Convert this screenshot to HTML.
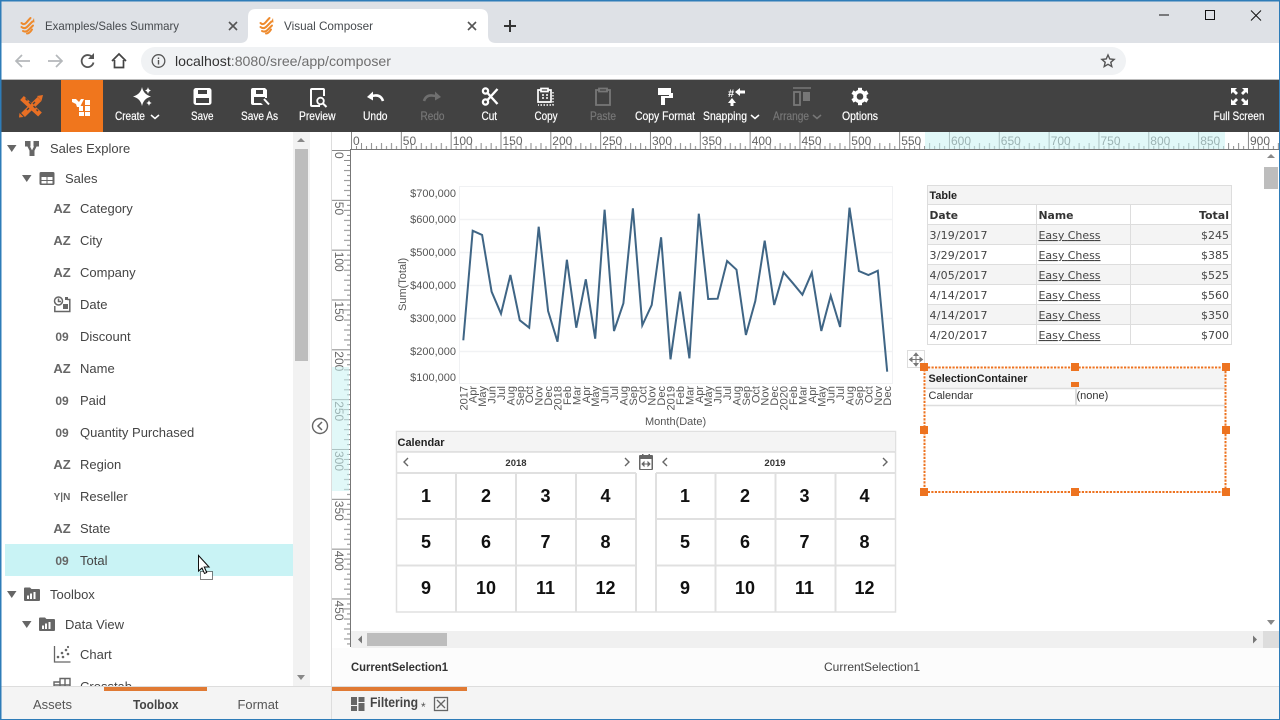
<!DOCTYPE html>
<html lang="en"><head><meta charset="utf-8"><title>Visual Composer</title>
<style>
html,body{margin:0;padding:0;width:1280px;height:720px;overflow:hidden;background:#fff}
svg{display:block;font-family:"Liberation Sans",sans-serif}
.tb{font-size:12px;fill:#fff;stroke:#fff;stroke-width:.2}
.tb.dis{fill:#777;stroke:#777}
.tree{font-size:13px;fill:#444}
.ty{font-size:13px;font-weight:bold;fill:#666;text-anchor:middle}
.n{font-size:12px;font-weight:bold;fill:#666;text-anchor:middle}
.r{font-size:12px;fill:#666}
.ax{font-size:11px;fill:#555}
.xl{font-size:11px;fill:#555;text-anchor:end}
.t{font-family:"DejaVu Sans",sans-serif;font-size:11px;fill:#444}
.tbd{font-family:"DejaVu Sans",sans-serif;font-size:11px;font-weight:bold;fill:#333}
.d{font-size:18px;font-weight:bold;fill:#111;text-anchor:middle}
.h{fill:#ed7320}
</style></head><body>
<svg width="1280" height="720" viewBox="0 0 1280 720" xmlns="http://www.w3.org/2000/svg">
<defs>
<pattern id="rh" patternUnits="userSpaceOnUse" x="351" y="132" width="49.83" height="17">
<path d="M.5 0V17M5.5 14V17M10.5 11V17M15.5 14V17M20.5 11V17M25.5 14V17M30.5 11V17M35.5 14V17M40.5 11V17M45.5 14V17" stroke="#888" fill="none"/>
</pattern>
<pattern id="rv" patternUnits="userSpaceOnUse" x="332" y="150" width="18" height="49.83">
<path d="M0 .5H18M15 5.5H18M12 10.5H18M15 15.5H18M12 20.5H18M15 25.5H18M12 30.5H18M15 35.5H18M12 40.5H18M15 45.5H18" stroke="#888" fill="none"/>
</pattern>
<g id="fl"><path d="M1.500 6q2.500 2.500 5-.5t4-4.500M1.500 10q3 2.500 6-.5t5-5M3 14q3 1.500 5.500-1t4.500-4.500M7 16.500q2.500 0 5-4" stroke="#ee8a2d" stroke-width="2" fill="none" stroke-linecap="round"/><path d="M12 5l2-4 .5 4.500z" fill="#ee8a2d"/></g>
<path id="tooth" d="M0-4.500V-8.700" stroke="#fff" stroke-width="4"/>
</defs>

<!-- chrome -->
<rect width="1280" height="43" fill="#dee1e6"/>
<rect width="1280" height="1.5" fill="#2e7cb8"/>
<path d="M240 43Q248 43 248 35V17Q248 9 256 9H480Q488 9 488 17V35Q488 43 496 43Z" fill="#fff"/>
<use href="#fl" x="20" y="17"/><use href="#fl" x="259" y="17"/>
<text x="45" y="30" font-size="12" fill="#45494d" textLength="134" lengthAdjust="spacingAndGlyphs">Examples/Sales Summary</text>
<text x="284" y="30" font-size="12" fill="#45494d" textLength="89" lengthAdjust="spacingAndGlyphs">Visual Composer</text>
<path d="M229 22l8 8M237 22l-8 8M468 22l8 8M476 22l-8 8" stroke="#555" stroke-width="1.600"/>
<path d="M510 20v12M504 26h12" stroke="#333" stroke-width="2"/>
<path d="M1159 15h10" stroke="#111" stroke-width="1"/>
<rect x="1205.500" y="10.500" width="9" height="9" fill="none" stroke="#111"/>
<path d="M1251 10.500l10 10M1261 10.500l-10 10" stroke="#111"/>
<rect y="43" width="1280" height="37" fill="#fff"/>
<rect x="141" y="47" width="985" height="28" rx="14" fill="#f0f2f4"/>
<path d="M30 61H16M22 55l-6 6 6 6" stroke="#b5b8bb" stroke-width="1.700" fill="none"/>
<path d="M62 61H48M56 55l6 6-6 6" stroke="#b5b8bb" stroke-width="1.700" fill="none"/>
<path d="M92.500 57.500a6 6 0 1 0 1 5" stroke="#555" stroke-width="1.800" fill="none"/><path d="M94 53v6h-6z" fill="#555"/>
<path d="M112 61l7-7 7 7M114.500 60v7.500h9V60" stroke="#444" stroke-width="1.700" fill="none"/>
<circle cx="158.500" cy="61" r="6.300" fill="none" stroke="#555" stroke-width="1.300"/><path d="M158.500 60v4.500M158.500 57.500v1.500" stroke="#555" stroke-width="1.400"/>
<text x="175" y="66" font-size="14" fill="#6f6f6f" textLength="216" lengthAdjust="spacingAndGlyphs"><tspan fill="#333">localhost</tspan>:8080/sree/app/composer</text>
<path d="M1108 55l1.800 4 4.300.4-3.300 2.900 1 4.300-3.800-2.300-3.800 2.300 1-4.300-3.300-2.900 4.300-.4z" fill="none" stroke="#555" stroke-width="1.400"/>

<!-- toolbar -->
<rect y="79" width="1280" height="1" fill="#bbb"/>
<rect y="80" width="1280" height="52" fill="#424242"/>
<rect x="61" y="80" width="42" height="52" fill="#f0761d"/>
<g fill="none">
<path d="M22 98l18 16.500M39.500 99L23 115" stroke="#e86f24" stroke-width="5.500"/>
<path d="M25.500 98.500l2 2M29 102l2 2M33.500 106l2 2M36.500 109.500l1.500 1.500M35 102l-2 2M27 110l2-2" stroke="#424242" stroke-width="1.400"/>
</g>
<path d="M37 96l6-1-1.500 6zM19.500 113l4 4-4.500 .5z" fill="#e86f24"/>
<g fill="#fff"><path d="M72 99h4l3 3 2-3h3l-4 8h-3l-1-3-4-2z"/><rect x="85" y="100" width="5" height="5"/><rect x="85" y="106" width="5" height="5"/><rect x="85" y="112" width="5" height="4"/><rect x="79" y="112" width="5" height="4"/><rect x="79" y="106" width="4" height="5"/></g>

<g fill="#fff">
<!-- create -->
<path d="M142 87q1.500 7.500 9 9.500-7.500 2-9 9.500-1.500-7.500-9-9.500 7.500-2 9-9.500z"/>
<path d="M148 87q.5 2.800 3 3.500-2.500.7-3 3.500-.5-2.800-3-3.500 2.500-.7 3-3.500zM149 100q.5 2.500 2.800 3-2.300.5-2.800 3-.5-2.500-2.800-3 2.300-.5 2.800-3z"/>
<!-- save -->
<path fill-rule="evenodd" d="M196 88h13a2.500 2.500 0 0 1 2.500 2.500v12a2.500 2.500 0 0 1-2.500 2.500h-13a2.500 2.500 0 0 1-2.500-2.500v-12a2.500 2.500 0 0 1 2.500-2.500zm2 2v4h9v-4zm-2 8v5h13v-5z"/>
<!-- save as -->
<path fill-rule="evenodd" d="M253 88h12l2 2v8h-2v-1h-11v6h7l2 2h-10a2 2 0 0 1-2-2V90a2 2 0 0 1 2-2zm3 2v4h7v-4z"/>
<path d="M264 99l5 5.500" stroke="#fff" stroke-width="2" fill="none"/>
</g>
<!-- preview -->
<path d="M320 106h-8a1 1 0 0 1-1-1V90a1 1 0 0 1 1-1h11a1 1 0 0 1 1 1v6" stroke="#fff" stroke-width="2" fill="none"/>
<circle cx="320.500" cy="101" r="3.300" stroke="#fff" stroke-width="1.800" fill="none"/><path d="M323 103.500l3.500 3.500" stroke="#fff" stroke-width="2"/>
<!-- undo/redo -->
<path d="M383 101q-2-6-8-5.500l-4 .5" stroke="#fff" stroke-width="2.600" fill="none"/><path d="M367 97l6-5.500v9z" fill="#fff"/>
<path d="M424 101q2-6 8-5.500l4 .5" stroke="#6f6f6f" stroke-width="2.600" fill="none"/><path d="M441 97l-6-5.500v9z" fill="#6f6f6f"/>
<!-- cut -->
<g stroke="#fff" fill="none"><circle cx="485.500" cy="91" r="2.600" stroke-width="2.300"/><circle cx="485.500" cy="102" r="2.600" stroke-width="2.300"/><path d="M487.500 93l10 11M487.500 100l10-11" stroke-width="2.400"/></g>
<!-- copy -->
<g fill="none" stroke="#fff"><path d="M541 90h-3v12h13V90h-3M541 88.500h7v3h-7z" stroke-width="1.700"/><path d="M542 95h2M546 95h2M546 98h2M542 98h2" stroke-width="1.600"/><path d="M553 92v13h-15" stroke-width="1.400" stroke-dasharray="1.500 1.500"/></g>
<!-- paste -->
<path d="M599 90h-3v15h14V90h-3M599 88.500h8v3h-8z" fill="none" stroke="#777" stroke-width="1.800"/>
<!-- format -->
<path d="M658 88h13v5h2v5h-8v7h-4v-9h8v-1h-11z" fill="#fff"/>
<!-- snapping -->
<text x="728" y="97" font-size="11" font-weight="bold" fill="#fff">#</text>
<path d="M735 92l5-4v2.500h5v3h-5V96zM732 98l4 5h-2.500v3h-3v-3H728z" fill="#fff"/>
<!-- arrange -->
<path d="M793 88h18" stroke="#777" stroke-width="1.600"/><rect x="794" y="92" width="6" height="13" fill="none" stroke="#777" stroke-width="1.800"/><rect x="803" y="92" width="7" height="9" fill="#777"/>
<!-- options -->
<g transform="translate(860 96.500)">
<circle r="5" fill="none" stroke="#fff" stroke-width="3.400"/>
<use href="#tooth"/><use href="#tooth" transform="rotate(60)"/><use href="#tooth" transform="rotate(120)"/><use href="#tooth" transform="rotate(180)"/><use href="#tooth" transform="rotate(240)"/><use href="#tooth" transform="rotate(300)"/>
</g>
<!-- fullscreen -->
<path fill="#fff" d="M1231 88h6l-2 2 3 3-2 2-3-3-2 2zM1248 88v6l-2-2-3 3-2-2 3-3-2-2zM1231 105v-6l2 2 3-3 2 2-3 3 2 2zM1248 105h-6l2-2-3-3 2-2 3 3 2-2z"/>

<g>
<text class="tb" x="115" y="120" textLength="30" lengthAdjust="spacingAndGlyphs">Create</text>
<text class="tb" x="191" y="120" textLength="22.500" lengthAdjust="spacingAndGlyphs">Save</text>
<text class="tb" x="241" y="120" textLength="37" lengthAdjust="spacingAndGlyphs">Save As</text>
<text class="tb" x="299" y="120" textLength="36.500" lengthAdjust="spacingAndGlyphs">Preview</text>
<text class="tb" x="363" y="120" textLength="24.500" lengthAdjust="spacingAndGlyphs">Undo</text>
<text class="tb dis" x="420.500" y="120" textLength="24" lengthAdjust="spacingAndGlyphs">Redo</text>
<text class="tb" x="481.500" y="120" textLength="15.500" lengthAdjust="spacingAndGlyphs">Cut</text>
<text class="tb" x="534.500" y="120" textLength="23" lengthAdjust="spacingAndGlyphs">Copy</text>
<text class="tb dis" x="590" y="120" textLength="26" lengthAdjust="spacingAndGlyphs">Paste</text>
<text class="tb" x="635" y="120" textLength="60" lengthAdjust="spacingAndGlyphs">Copy Format</text>
<text class="tb" x="703" y="120" textLength="44" lengthAdjust="spacingAndGlyphs">Snapping</text>
<text class="tb dis" x="773" y="120" textLength="36" lengthAdjust="spacingAndGlyphs">Arrange</text>
<text class="tb" x="842" y="120" textLength="36" lengthAdjust="spacingAndGlyphs">Options</text>
<text class="tb" x="1213.500" y="120" textLength="51" lengthAdjust="spacingAndGlyphs">Full Screen</text>
<path d="M151 115l4 3.500 4-3.500M751 115l4 3.500 4-3.500" stroke="#fff" stroke-width="1.500" fill="none"/>
<path d="M813 115l4 3.500 4-3.500" stroke="#777" stroke-width="1.500" fill="none"/>
</g>

<!-- left panel -->
<rect x="293" y="132" width="17" height="554" fill="#f2f2f2"/>
<rect x="295" y="149" width="13" height="212" fill="#bdbdbd"/>
<path d="M301 138l-4 4h8zM297 675h8l-4 5z" fill="#888"/>
<rect x="5" y="544" width="288" height="32" fill="#c9f3f5"/>
<path d="M7 145h9.500l-4.750 7zM22 175h9.500l-4.750 7zM7 591h9.500l-4.750 7zM22 621h9.500l-4.750 7z" fill="#666"/>
<path d="M27.500 144l4.500 9M36.500 144L32 153" stroke="#666" stroke-width="2.400"/>
<path d="M25 141h5.500v5.500H25zM33.500 141H39v5.500h-5.500zM29.500 150.500h5v5.500h-5z" fill="#666"/>
<path fill="#666" fill-rule="evenodd" d="M41 172h12a1.500 1.500 0 0 1 1.500 1.500v10a1.500 1.500 0 0 1-1.500 1.500H41a1.500 1.500 0 0 1-1.500-1.500v-10A1.500 1.500 0 0 1 41 172zm.5 5v3h5v-3zm6 0v3h5v-3zm-6 4v2.500h5V181zm6 0v2.500h5V181z"/>
<text class="tree" x="50" y="153">Sales Explore</text>
<text class="tree" x="65" y="183">Sales</text>
<text class="ty" x="62" y="213">AZ</text><text class="tree" x="80" y="213">Category</text>
<text class="ty" x="62" y="245">AZ</text><text class="tree" x="80" y="245">City</text>
<text class="ty" x="62" y="277">AZ</text><text class="tree" x="80" y="277">Company</text>
<g fill="none" stroke="#666" stroke-width="1.500"><circle cx="58.500" cy="301" r="4"/><path d="M58.500 298.500v3h2.500M54.800 306v5.500h15V299.500h-2.500"/></g><rect x="63" y="304" width="5" height="5" fill="#666"/><rect x="65" y="297" width="3" height="3" fill="#666"/>
<text class="tree" x="80" y="309">Date</text>
<text class="n" x="62" y="341">09</text><text class="tree" x="80" y="341">Discount</text>
<text class="ty" x="62" y="373">AZ</text><text class="tree" x="80" y="373">Name</text>
<text class="n" x="62" y="405">09</text><text class="tree" x="80" y="405">Paid</text>
<text class="n" x="62" y="437">09</text><text class="tree" x="80" y="437">Quantity Purchased</text>
<text class="ty" x="62" y="469">AZ</text><text class="tree" x="80" y="469">Region</text>
<text x="62" y="500" font-size="10" font-weight="bold" fill="#666" text-anchor="middle">Y|N</text><text class="tree" x="80" y="501">Reseller</text>
<text class="ty" x="62" y="533">AZ</text><text class="tree" x="80" y="533">State</text>
<text class="n" x="62" y="565">09</text><text class="tree" x="80" y="565">Total</text>
<path fill="#666" fill-rule="evenodd" d="M25 587.500h5l1.500 1.500H39a1 1 0 0 1 1 1V600a1 1 0 0 1-1 1H25a1 1 0 0 1-1-1V588.500a1 1 0 0 1 1-1zm5 6v5.500h2v-5.500zm3.500-1.500V599h2v-7zM27 595.500V599h2v-3.500z"/>
<text class="tree" x="50" y="599">Toolbox</text>
<path fill="#666" fill-rule="evenodd" d="M40 617.500h5l1.500 1.500H54a1 1 0 0 1 1 1V630a1 1 0 0 1-1 1H40a1 1 0 0 1-1-1V618.500a1 1 0 0 1 1-1zm5 6v5.500h2v-5.500zm3.500-1.500V629h2v-7zM42 625.500V629h2v-3.500z"/>
<text class="tree" x="65" y="629">Data View</text>
<path d="M54.500 646v16h16" stroke="#666" stroke-width="1.300" fill="none"/><g fill="#666"><circle cx="58" cy="657" r="1.300"/><circle cx="62" cy="653" r="1.300"/><circle cx="63" cy="657" r="1.300"/><circle cx="66" cy="650" r="1.300"/><circle cx="68" cy="654" r="1.300"/><circle cx="68" cy="647" r="1.100"/></g>
<text class="tree" x="80" y="659">Chart</text>
<path d="M54 682h6v-3.500h10V690H54zM60 678.500V690M65 678.500V690M54 685h16" fill="none" stroke="#666" stroke-width="1.400"/>
<text class="tree" x="80" y="691">Crosstab</text>
<path d="M198.500 555.500v15.500l3.500-3 2.500 5.500 2.200-1-2.500-5.500h4.800z" fill="#fff" stroke="#111" stroke-width="1"/>
<rect x="200.500" y="571.500" width="12" height="8" fill="#fff" stroke="#000" stroke-dasharray="1 1"/>
<path d="M198.500 555.500v15.500l3.500-3 2.500 5.500 2.200-1-2.500-5.500h4.800z" fill="#fff" stroke="#111" stroke-width="1"/>
<circle cx="320" cy="426" r="7.500" fill="#fff" stroke="#666" stroke-width="1.400"/><path d="M322 422l-4 4 4 4" stroke="#666" stroke-width="1.500" fill="none"/>
<rect x="331" y="132" width="1" height="588" fill="#ddd"/>

<!-- rulers -->
<rect x="332" y="132" width="948" height="18" fill="#fff"/>
<rect x="351" y="132" width="929" height="17" fill="url(#rh)"/>
<rect x="350" y="149" width="930" height="1" fill="#777"/>
<g class="r">
<text class="r" x="353" y="145">0</text><text class="r" x="402.800" y="145">50</text><text class="r" x="452.700" y="145">100</text><text class="r" x="502.500" y="145">150</text><text class="r" x="552.300" y="145">200</text><text class="r" x="602.200" y="145">250</text><text class="r" x="652" y="145">300</text><text class="r" x="701.800" y="145">350</text><text class="r" x="751.700" y="145">400</text><text class="r" x="801.500" y="145">450</text><text class="r" x="851.300" y="145">500</text><text class="r" x="901.200" y="145">550</text><text class="r" x="951" y="145">600</text><text class="r" x="1000.800" y="145">650</text><text class="r" x="1050.700" y="145">700</text><text class="r" x="1100.500" y="145">750</text><text class="r" x="1150.300" y="145">800</text><text class="r" x="1200.200" y="145">850</text><text class="r" x="1250" y="145">900</text>
</g>
<rect x="925" y="132" width="300" height="17" fill="#c9f3f2" opacity=".55"/>
<rect x="332" y="150" width="18" height="497" fill="url(#rv)"/>
<rect x="350" y="149" width="1" height="498" fill="#777"/>
<g>
<text class="r" transform="translate(335 152) rotate(90)">0</text><text class="r" transform="translate(335 201.800) rotate(90)">50</text><text class="r" transform="translate(335 251.700) rotate(90)">100</text><text class="r" transform="translate(335 301.500) rotate(90)">150</text><text class="r" transform="translate(335 351.300) rotate(90)">200</text><text class="r" transform="translate(335 401.200) rotate(90)">250</text><text class="r" transform="translate(335 451) rotate(90)">300</text><text class="r" transform="translate(335 500.800) rotate(90)">350</text><text class="r" transform="translate(335 550.700) rotate(90)">400</text><text class="r" transform="translate(335 600.500) rotate(90)">450</text>
</g>
<rect x="332" y="367" width="17" height="124" fill="#c9f3f2" opacity=".55"/>

<!-- chart -->
<rect x="459.500" y="186.500" width="433" height="197" fill="#fff" stroke="#f0f1f3"/>
<path d="M460 219.500H892M460 252.500H892M460 285.500H892M460 318.500H892M460 351.500H892" stroke="#f1f2f4" stroke-width="1.500"/>
<g class="ax" text-anchor="end">
<text class="ax" x="456" y="197">$700,000</text><text class="ax" x="456" y="223">$600,000</text><text class="ax" x="456" y="256">$500,000</text><text class="ax" x="456" y="289">$400,000</text><text class="ax" x="456" y="322">$300,000</text><text class="ax" x="456" y="355">$200,000</text><text class="ax" x="456" y="381">$100,000</text>
</g>
<text class="ax" font-size="11" transform="translate(406 311) rotate(-90)">Sum(Total)</text>
<text class="ax" x="645" y="425">Month(Date)</text>
<polyline fill="none" stroke="#3f6585" stroke-width="2" stroke-linejoin="miter" points="463.300,340.300 472.700,230.700 482.100,235 491.600,291.700 501,313.700 510.400,275 519.800,320.300 529.200,327.700 538.700,226.700 548.100,311 557.500,341.700 566.900,259.700 576.300,327.700 585.800,279.300 595.200,338.700 604.600,209.700 614,331 623.400,303.300 632.900,208.300 642.300,325.300 651.700,305 661.100,237.300 670.500,359.300 680,291.700 689.400,358.300 698.800,213.700 708.200,299 717.600,298.700 727.100,261 736.500,269.700 745.900,335 755.300,301 764.700,240.700 774.200,305 783.600,272.300 793,283.300 802.400,294.700 811.800,272.700 821.300,331 830.700,295.700 840.100,327 849.500,207.700 858.900,271 868.400,275 877.800,270.700 887.200,371.700"/>
<g class="xl">
<text class="xl" transform="translate(467.300 386) rotate(-90)">2017</text><text class="xl" transform="translate(476.700 386) rotate(-90)">Apr</text><text class="xl" transform="translate(486.100 386) rotate(-90)">May</text><text class="xl" transform="translate(495.600 386) rotate(-90)">Jun</text><text class="xl" transform="translate(505 386) rotate(-90)">Jul</text><text class="xl" transform="translate(514.400 386) rotate(-90)">Aug</text><text class="xl" transform="translate(523.800 386) rotate(-90)">Sep</text><text class="xl" transform="translate(533.200 386) rotate(-90)">Oct</text><text class="xl" transform="translate(542.700 386) rotate(-90)">Nov</text><text class="xl" transform="translate(552.100 386) rotate(-90)">Dec</text><text class="xl" transform="translate(561.500 386) rotate(-90)">2018</text><text class="xl" transform="translate(570.900 386) rotate(-90)">Feb</text><text class="xl" transform="translate(580.300 386) rotate(-90)">Mar</text><text class="xl" transform="translate(589.800 386) rotate(-90)">Apr</text><text class="xl" transform="translate(599.200 386) rotate(-90)">May</text><text class="xl" transform="translate(608.600 386) rotate(-90)">Jun</text><text class="xl" transform="translate(618 386) rotate(-90)">Jul</text><text class="xl" transform="translate(627.400 386) rotate(-90)">Aug</text><text class="xl" transform="translate(636.900 386) rotate(-90)">Sep</text><text class="xl" transform="translate(646.300 386) rotate(-90)">Oct</text><text class="xl" transform="translate(655.700 386) rotate(-90)">Nov</text><text class="xl" transform="translate(665.100 386) rotate(-90)">Dec</text><text class="xl" transform="translate(674.500 386) rotate(-90)">2019</text><text class="xl" transform="translate(684 386) rotate(-90)">Feb</text><text class="xl" transform="translate(693.400 386) rotate(-90)">Mar</text><text class="xl" transform="translate(702.800 386) rotate(-90)">Apr</text><text class="xl" transform="translate(712.200 386) rotate(-90)">May</text><text class="xl" transform="translate(721.600 386) rotate(-90)">Jun</text><text class="xl" transform="translate(731.100 386) rotate(-90)">Jul</text><text class="xl" transform="translate(740.500 386) rotate(-90)">Aug</text><text class="xl" transform="translate(749.900 386) rotate(-90)">Sep</text><text class="xl" transform="translate(759.300 386) rotate(-90)">Oct</text><text class="xl" transform="translate(768.700 386) rotate(-90)">Nov</text><text class="xl" transform="translate(778.200 386) rotate(-90)">Dec</text><text class="xl" transform="translate(787.600 386) rotate(-90)">2020</text><text class="xl" transform="translate(797 386) rotate(-90)">Feb</text><text class="xl" transform="translate(806.400 386) rotate(-90)">Mar</text><text class="xl" transform="translate(815.800 386) rotate(-90)">Apr</text><text class="xl" transform="translate(825.300 386) rotate(-90)">May</text><text class="xl" transform="translate(834.700 386) rotate(-90)">Jun</text><text class="xl" transform="translate(844.100 386) rotate(-90)">Jul</text><text class="xl" transform="translate(853.500 386) rotate(-90)">Aug</text><text class="xl" transform="translate(862.900 386) rotate(-90)">Sep</text><text class="xl" transform="translate(872.400 386) rotate(-90)">Oct</text><text class="xl" transform="translate(881.800 386) rotate(-90)">Nov</text><text class="xl" transform="translate(891.200 386) rotate(-90)">Dec</text>
</g>

<!-- table -->
<rect x="927.500" y="185.500" width="304" height="159" fill="#fff" stroke="#ddd"/>
<rect x="928" y="186" width="303" height="18" fill="#f4f4f4"/>
<rect x="928" y="225" width="303" height="19" fill="#f4f4f4"/><rect x="928" y="265" width="303" height="19" fill="#f4f4f4"/><rect x="928" y="305" width="303" height="19" fill="#f4f4f4"/>
<path d="M928 204.500H1231M928 224.500H1231M928 244.500H1231M928 264.500H1231M928 284.500H1231M928 304.500H1231M928 324.500H1231M1036.500 205V344M1130.500 205V344" stroke="#ddd"/>
<text x="929.500" y="199" font-size="11" font-weight="bold" fill="#222" textLength="27.500" lengthAdjust="spacingAndGlyphs">Table</text>
<text class="tbd" x="929.500" y="219" textLength="28.500" lengthAdjust="spacingAndGlyphs">Date</text><text class="tbd" x="1038.500" y="219" textLength="35" lengthAdjust="spacingAndGlyphs">Name</text><text class="tbd" x="1229" y="219" text-anchor="end">Total</text>
<text class="t" x="929.500" y="239" textLength="58">3/19/2017</text><text class="t" x="1038.500" y="239" text-decoration="underline" textLength="62">Easy Chess</text><text class="t" x="1229" y="239" text-anchor="end">$245</text>
<text class="t" x="929.500" y="259" textLength="58">3/29/2017</text><text class="t" x="1038.500" y="259" text-decoration="underline" textLength="62">Easy Chess</text><text class="t" x="1229" y="259" text-anchor="end">$385</text>
<text class="t" x="929.500" y="279" textLength="58">4/05/2017</text><text class="t" x="1038.500" y="279" text-decoration="underline" textLength="62">Easy Chess</text><text class="t" x="1229" y="279" text-anchor="end">$525</text>
<text class="t" x="929.500" y="299" textLength="58">4/14/2017</text><text class="t" x="1038.500" y="299" text-decoration="underline" textLength="62">Easy Chess</text><text class="t" x="1229" y="299" text-anchor="end">$560</text>
<text class="t" x="929.500" y="319" textLength="58">4/14/2017</text><text class="t" x="1038.500" y="319" text-decoration="underline" textLength="62">Easy Chess</text><text class="t" x="1229" y="319" text-anchor="end">$350</text>
<text class="t" x="929.500" y="339" textLength="58">4/20/2017</text><text class="t" x="1038.500" y="339" text-decoration="underline" textLength="62">Easy Chess</text><text class="t" x="1229" y="339" text-anchor="end">$700</text>

<!-- selection container -->
<rect x="907.500" y="350.500" width="17" height="17" fill="#fff" stroke="#ddd"/>
<path d="M916 354v11M910.500 359.500h11M916 353l-2 2.500h4zM916 366l-2-2.500h4zM909.500 359.500l2.500-2v4zM922.500 359.500l-2.500-2v4z" fill="#777" stroke="#777" stroke-width="1"/>
<rect x="926" y="369" width="299" height="19" fill="#f4f4f4"/>
<path d="M926 388.500H1225M926 405.500H1225" stroke="#ddd" stroke-width="1.500"/><path d="M1076 389V405" stroke="#ddd" stroke-width="2"/>
<text x="928.500" y="382" font-size="11" font-weight="bold" fill="#222" textLength="99" lengthAdjust="spacingAndGlyphs">SelectionContainer</text>
<text x="928.500" y="399" font-size="11" fill="#333">Calendar</text>
<text x="1076.500" y="399" font-size="11" fill="#333">(none)</text>
<rect x="924.500" y="367.500" width="301" height="124.500" fill="none" stroke="#ed7320" stroke-width="2" stroke-dasharray="2.200 1.300"/>
<rect class="h" x="920" y="363" width="8" height="8"/><rect class="h" x="1071" y="363" width="8" height="8"/><rect class="h" x="1222" y="363" width="8" height="8"/><rect class="h" x="1071" y="382" width="8" height="5"/><rect class="h" x="920" y="426" width="8" height="8"/><rect class="h" x="1222" y="426" width="8" height="8"/><rect class="h" x="920" y="488" width="8" height="8"/><rect class="h" x="1071" y="488" width="8" height="8"/><rect class="h" x="1222" y="488" width="8" height="8"/>

<!-- calendar -->
<rect x="396.500" y="431.500" width="499" height="180.500" fill="#fff" stroke="#e0e0e0" stroke-width="1.500"/>
<rect x="397" y="432" width="498" height="20" fill="#f4f4f4"/>
<path d="M397 452H895" stroke="#ccc"/>
<text x="397.500" y="446" font-size="11" font-weight="bold" fill="#222">Calendar</text>
<text x="516" y="466" font-size="9.500" font-weight="bold" fill="#333" text-anchor="middle">2018</text>
<text x="775" y="466" font-size="9.500" font-weight="bold" fill="#333" text-anchor="middle">2019</text>
<path d="M408 458l-4 4 4 4M625 458l4 4-4 4M667 458l-4 4 4 4M883 458l4 4-4 4" stroke="#666" stroke-width="1.400" fill="none"/>
<path fill="#666" fill-rule="evenodd" d="M640 455h2v-1h1.500v1h5v-1h1.500v1h2a1 1 0 0 1 1 1v13a1 1 0 0 1-1 1h-12a1 1 0 0 1-1-1v-13a1 1 0 0 1 1-1zm.5 4v10h11v-10z"/><path d="M642 464h8M642 464l2-2v4zM650 464l-2-2v4z" stroke="#666" fill="#666"/>
<path d="M397 473H636M656 473H895M397 519H636M656 519H895M397 565.500H636M656 565.500H895M456 473V612M516 473V612M576 473V612M636 473V612M656 473V612M715.500 473V612M775.500 473V612M835.500 473V612" stroke="#e0e0e0" stroke-width="2"/>
<g>
<text class="d" x="426" y="502">1</text><text class="d" x="486" y="502">2</text><text class="d" x="545.500" y="502">3</text><text class="d" x="605.500" y="502">4</text>
<text class="d" x="426" y="548">5</text><text class="d" x="486" y="548">6</text><text class="d" x="545.500" y="548">7</text><text class="d" x="605.500" y="548">8</text>
<text class="d" x="426" y="594">9</text><text class="d" x="486" y="594">10</text><text class="d" x="545.500" y="594">11</text><text class="d" x="605.500" y="594">12</text>
<text class="d" x="685" y="502">1</text><text class="d" x="745" y="502">2</text><text class="d" x="804.500" y="502">3</text><text class="d" x="864.500" y="502">4</text>
<text class="d" x="685" y="548">5</text><text class="d" x="745" y="548">6</text><text class="d" x="804.500" y="548">7</text><text class="d" x="864.500" y="548">8</text>
<text class="d" x="685" y="594">9</text><text class="d" x="745" y="594">10</text><text class="d" x="804.500" y="594">11</text><text class="d" x="864.500" y="594">12</text>
</g>

<!-- scrollbars -->
<rect x="1263" y="150" width="16" height="481" fill="#fff"/>
<rect x="1264" y="167" width="14" height="22" fill="#bdbdbd"/>
<path d="M1271 154l-4 4h8zM1267 620h8l-4 5z" fill="#888"/>
<rect x="351" y="631" width="912" height="17" fill="#f0f0f0"/>
<rect x="1263" y="631" width="16" height="17" fill="#ddd"/>
<rect x="367" y="633" width="80" height="13" fill="#bdbdbd"/>
<path d="M362 635.500v8l-4-4zM1253 635.500v8l4-4z" fill="#777"/>

<!-- status / bottom -->
<rect x="332" y="648" width="948" height="38" fill="#fcfcfc"/>
<text x="351" y="671" font-size="12" font-weight="bold" fill="#333" textLength="97" lengthAdjust="spacingAndGlyphs">CurrentSelection1</text>
<text x="824" y="671" font-size="12" fill="#444" textLength="96" lengthAdjust="spacingAndGlyphs">CurrentSelection1</text>
<rect y="686" width="1280" height="34" fill="#f4f4f4"/>
<rect y="686" width="1280" height="1" fill="#ddd"/>
<rect x="331" y="686" width="1" height="34" fill="#ddd"/>
<rect x="104" y="687" width="103" height="4" fill="#e07a34"/>
<rect x="332" y="687" width="135" height="4" fill="#e07a34"/>
<text x="33" y="709" font-size="13" fill="#555" textLength="39" lengthAdjust="spacingAndGlyphs">Assets</text>
<text x="133" y="709" font-size="13" font-weight="bold" fill="#444" textLength="45.500" lengthAdjust="spacingAndGlyphs">Toolbox</text>
<text x="237.500" y="709" font-size="13" fill="#555" textLength="41" lengthAdjust="spacingAndGlyphs">Format</text>
<path d="M351 697h6v8h-6zM358.500 697h6v5h-6zM358.500 703h6v8h-6zM351 706h6v5h-6z" fill="#666"/>
<text x="370" y="707" font-size="13.500" font-weight="bold" fill="#444" textLength="48" lengthAdjust="spacingAndGlyphs">Filtering</text>
<text x="421" y="711" font-size="12" fill="#555">*</text>
<rect x="434.500" y="697.500" width="13" height="13" fill="none" stroke="#666" stroke-width="1.300"/><path d="M437 700l8 8M445 700l-8 8" stroke="#666" stroke-width="1.300"/>

<!-- window border -->
<rect y="0" width="1.500" height="720" fill="#2e7cb8"/>
<rect x="1279" y="0" width="1" height="720" fill="#2e7cb8"/>
<rect y="719" width="1280" height="1" fill="#2e7cb8"/>
</svg>
</body></html>
